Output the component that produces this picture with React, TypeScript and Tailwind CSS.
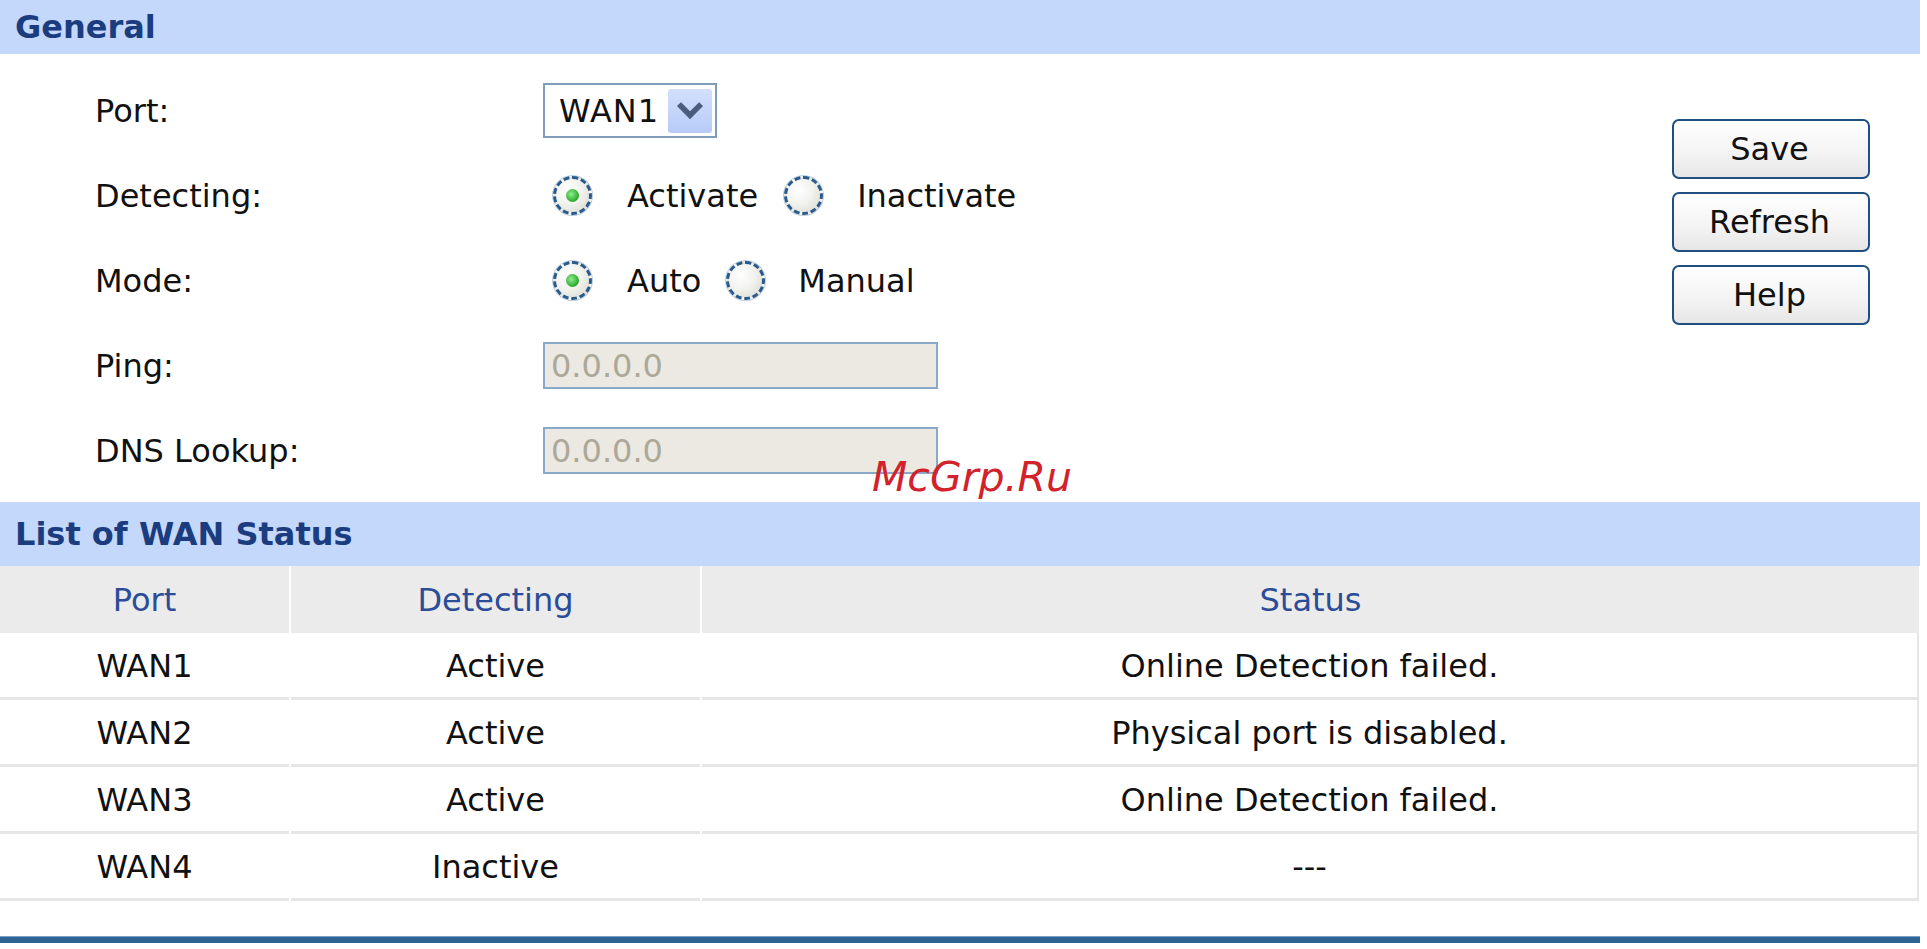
import React from "react";

function SectionHeader({ title, h }: { title: string; h: string }) {
  return (
    <div className={`${h} w-[1920px] bg-[#c4d8fc] flex items-center pl-[15px] font-bold text-[#1b3c7f] text-[32px] leading-none`}>
      {title}
    </div>
  );
}

function Radio({ checked }: { checked?: boolean }) {
  return (
    <span className="w-[39px] h-[39px] rounded-full border-[3px] border-dashed border-[#2a5a8a] shadow-[0_0_0_1px_#b9cde0] bg-[radial-gradient(circle_at_35%_35%,#ffffff_0%,#f2f2ee_45%,#d8d8d0_100%)] flex items-center justify-center shrink-0">
      {checked && (
        <span className="w-[13px] h-[13px] rounded-full bg-[radial-gradient(circle_at_40%_40%,#8df08d_0%,#2aa62a_70%,#1a7f1a_100%)]" />
      )}
    </span>
  );
}

function Row({ label, children }: { label: string; children?: React.ReactNode }) {
  return (
    <div className="h-[85px] flex items-center">
      <div className="w-[543px] pl-[95px] text-[#111]">{label}</div>
      {children}
    </div>
  );
}

function Btn({ label }: { label: string }) {
  return (
    <button className="w-[198px] h-[60px] rounded-[7px] border-2 border-[#1e4f80] bg-[linear-gradient(#ffffff,#f3f3f3_60%,#e6e6e6)] text-[32px] text-[#111] flex items-center justify-center leading-none font-['DejaVu_Sans',sans-serif] pr-[3px]">
      {label}
    </button>
  );
}

const rows = [
  ["WAN1", "Active", "Online Detection failed."],
  ["WAN2", "Active", "Physical port is disabled."],
  ["WAN3", "Active", "Online Detection failed."],
  ["WAN4", "Inactive", "---"],
];

export default function App() {
  return (
    <div className="relative w-[1927px] h-[949px] bg-white overflow-hidden text-[32px] leading-none text-[#111] font-['DejaVu_Sans',Verdana,sans-serif]">
      <div className="w-[1920px]">
        <SectionHeader title="General" h="h-[54px]" />
        <div className="flex h-[448px]">
          <div className="flex-1 pt-[14px]">
            <Row label="Port:">
              <div className="w-[174px] h-[55px] border-2 border-[#7f9db9] flex items-center justify-between pl-[14px] pr-[3px]">
                <span className="tracking-[1px]">WAN1</span>
                <span className="w-[44px] h-[44px] rounded-[3px] bg-[linear-gradient(#d3e0fd,#b7cbf8)] flex items-center justify-center">
                  <svg width="28" height="28" viewBox="0 0 20 20">
                    <path d="M3.5 6.5 L10 13 L16.5 6.5" fill="none" stroke="#4b5d7e" strokeWidth="4" strokeLinecap="square" />
                  </svg>
                </span>
              </div>
            </Row>
            <Row label="Detecting:">
              <div className="flex items-center pl-[10px]">
                <Radio checked />
                <span className="ml-[35px]">Activate</span>
                <span className="ml-[26px]"><Radio /></span>
                <span className="ml-[34px]">Inactivate</span>
              </div>
            </Row>
            <Row label="Mode:">
              <div className="flex items-center pl-[10px]">
                <Radio checked />
                <span className="ml-[35px]">Auto</span>
                <span className="ml-[25px]"><Radio /></span>
                <span className="ml-[33px]">Manual</span>
              </div>
            </Row>
            <Row label="Ping:">
              <div className="w-[395px] h-[47px] border-2 border-[#8aa8c8] bg-[#ebe9e1] flex items-center pl-[6px] text-[#aca899]">
                0.0.0.0
              </div>
            </Row>
            <Row label="DNS Lookup:">
              <div className="w-[395px] h-[47px] border-2 border-[#8aa8c8] bg-[#ebe9e1] flex items-center pl-[6px] text-[#aca899]">
                0.0.0.0
              </div>
            </Row>
          </div>
          <div className="flex flex-col gap-[13px] pt-[65px] mr-[50px]">
            <Btn label="Save" />
            <Btn label="Refresh" />
            <Btn label="Help" />
          </div>
        </div>
        <SectionHeader title="List of WAN Status" h="h-[64px]" />
        <div className="w-[1919px]">
          <div className="grid grid-cols-[289px_409px_1fr] gap-x-[2px] h-[67px] text-[#2b4c97]">
            <div className="bg-[#ebebeb] flex items-center justify-center">Port</div>
            <div className="bg-[#ebebeb] flex items-center justify-center">Detecting</div>
            <div className="bg-[#ebebeb] flex items-center justify-center">Status</div>
          </div>
          {rows.map((r, i) => (
            <div key={i} className="grid grid-cols-[289px_409px_1fr] gap-x-[2px] h-[67px]">
              <div className="border-b-[3px] border-[#e6e6e6] flex items-center justify-center pt-[2px]">{r[0]}</div>
              <div className="border-b-[3px] border-[#e6e6e6] flex items-center justify-center pt-[2px]">{r[1]}</div>
              <div className="border-b-[3px] border-r-2 border-[#e6e6e6] flex items-center justify-center pt-[2px]">{r[2]}</div>
            </div>
          ))}
        </div>
        <div className="h-[35px]" />
        <div className="h-[7px] bg-[#2e6494] border-t border-[#7fa2c4]" />
      </div>
      <div className="absolute left-[872px] top-[457px] italic text-[41px] leading-none text-[#d2222b]">McGrp.Ru</div>
    </div>
  );
}
